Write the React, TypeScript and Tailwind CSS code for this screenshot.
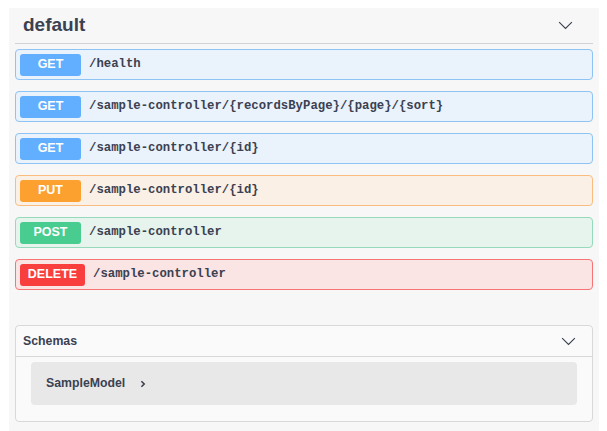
import React from 'react';

type Op = {
  method: string;
  path: string;
  badge: string;
  row: string;
  wide?: boolean;
};

const ops: Op[] = [
  { method: 'GET', path: '/health', badge: 'bg-[#61affe]', row: 'bg-[#eaf2fb] border-[#8ec3f6]' },
  { method: 'GET', path: '/sample-controller/{recordsByPage}/{page}/{sort}', badge: 'bg-[#61affe]', row: 'bg-[#eaf2fb] border-[#8ec3f6]' },
  { method: 'GET', path: '/sample-controller/{id}', badge: 'bg-[#61affe]', row: 'bg-[#eaf2fb] border-[#8ec3f6]' },
  { method: 'PUT', path: '/sample-controller/{id}', badge: 'bg-[#fca130]', row: 'bg-[#fbf0e6] border-[#fbbd7f]' },
  { method: 'POST', path: '/sample-controller', badge: 'bg-[#49cc90]', row: 'bg-[#e6f4ed] border-[#95dbbb]' },
  { method: 'DELETE', path: '/sample-controller', badge: 'bg-[#f93e3e]', row: 'bg-[#fae4e4] border-[#f77474]', wide: true },
];

const Chevron = ({ className }: { className?: string }) => (
  <svg viewBox="0 0 20 20" className={className} fill="none" stroke="currentColor" strokeWidth="1.3">
    <path d="M2.5 6 L10 13.5 L17.5 6" />
  </svg>
);

const OpRow: React.FC<{ op: Op }> = ({ op }) => (
  <div className={`h-[31px] flex items-center border rounded-[4px] px-[4px] ${op.row}`}>
    <span
      className={`h-[22px] ${op.wide ? 'w-[65px]' : 'w-[61px]'} rounded-[3px] flex items-center justify-center text-white font-bold text-[12.5px] ${op.badge}`}
    >
      {op.method}
    </span>
    <span className="ml-[8px] font-['Liberation_Mono',monospace] font-bold text-[12.3px] text-[#3b4151]">
      {op.path}
    </span>
  </div>
);

export default function App() {
  return (
    <div className="w-[607px] h-[431px] bg-white pl-[9px] pr-[8px] pt-[8px] overflow-hidden font-['Liberation_Sans',Arial,sans-serif]">
      <div className="h-full bg-[#f7f7f7] px-[6px]">
        <div className="h-[36px] flex items-center justify-between border-b border-[#d2d3d6] pl-[8px] pr-[19px]">
          <span className="text-[19px] font-bold text-[#3b4151]">default</span>
          <Chevron className="w-[17px] h-[17px] text-[#3b4151]" />
        </div>
        <div className="pt-[5px] flex flex-col gap-[11px]">
          {ops.map((op, i) => (
            <OpRow key={i} op={op} />
          ))}
        </div>
        <div className="mt-[35px] border border-[#d8d8d8] rounded-[4px] bg-[#fafafa] h-[97px]">
          <div className="h-[31px] flex items-center justify-between border-b border-[#d8d8d8] pl-[7px] pr-[15px]">
            <span className="text-[12.3px] font-bold text-[#3b4151]">Schemas</span>
            <Chevron className="w-[17px] h-[17px] text-[#3b4151]" />
          </div>
          <div className="mx-[15px] mt-[5px] h-[43px] rounded-[4px] bg-[#e8e8e8] flex items-center pl-[15px]">
            <span className="text-[12.3px] font-bold text-[#3b4151]">SampleModel</span>
            <svg viewBox="0 0 10 10" className="ml-[14px] w-[8px] h-[8px] text-[#3b4151]" fill="none" stroke="currentColor" strokeWidth="2">
              <path d="M3 1.5 L6.5 5 L3 8.5" />
            </svg>
          </div>
        </div>
      </div>
    </div>
  );
}
